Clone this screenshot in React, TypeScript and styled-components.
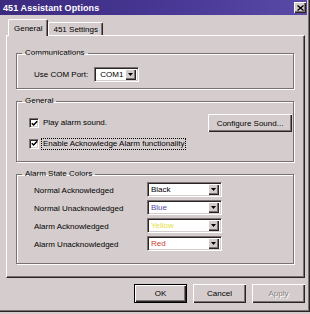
import React from 'react';
import styled, { createGlobalStyle } from 'styled-components';

const FACE = '#d5cdcd';
const SHADOW = '#7a7272';
const DARK = '#2a2424';

const GlobalStyle = createGlobalStyle`
  html, body {
    margin: 0;
    padding: 0;
    background: ${FACE};
  }
  body {
    font-family: "Liberation Sans", Arial, sans-serif;
    font-size: 8px;
    color: #000;
  }
`;

const Window = styled.div`
  width: 310px;
  height: 312px;
  box-sizing: border-box;
  background: ${FACE};
  display: flex;
  flex-direction: column;
  box-shadow: inset -1px -1px 0 ${DARK}, inset -2px -2px 0 ${SHADOW};
`;

const TitleBar = styled.div`
  height: 15px;
  margin-right: 3px;
  padding: 0 1px 0 3px;
  display: flex;
  align-items: center;
  justify-content: space-between;
  background: linear-gradient(90deg, #3b2a7e 0%, #4a3996 60%, #5a4aa8 100%);
`;

const Title = styled.span`
  color: #fff;
  font-weight: bold;
  font-size: 9px;
  letter-spacing: 0.1px;
`;

const CloseButton = styled.div`
  width: 12px;
  height: 11px;
  box-sizing: border-box;
  background: ${FACE};
  box-shadow: inset 1px 1px 0 #fff, inset -1px -1px 0 ${DARK}, inset -2px -2px 0 ${SHADOW};
  display: flex;
  align-items: center;
  justify-content: center;
`;

const Body = styled.div`
  padding: 4px 0 0 6px;
  display: flex;
  flex-direction: column;
`;

const TabStrip = styled.div`
  display: flex;
  align-items: flex-end;
  padding-left: 2px;
  height: 16px;
`;

const Tab = styled.div<{ $active?: boolean }>`
  box-sizing: border-box;
  height: ${({ $active }) => ($active ? '17px' : '13px')};
  margin-bottom: ${({ $active }) => ($active ? '-1px' : '0')};
  padding: 0 ${({ $active }) => ($active ? '5px' : '4px')};
  display: flex;
  align-items: center;
  background: ${FACE};
  border-top: 1px solid #fff;
  border-left: 1px solid #fff;
  border-right: 1px solid ${DARK};
  border-radius: 2px 2px 0 0;
  box-shadow: inset -1px 0 0 ${SHADOW};
  position: relative;
  z-index: ${({ $active }) => ($active ? 2 : 1)};
`;

const Panel = styled.div`
  width: 299px;
  height: 243px;
  box-sizing: border-box;
  border-top: 1px solid #fff;
  border-left: 1px solid #fff;
  border-right: 1px solid ${DARK};
  border-bottom: 1px solid ${DARK};
  box-shadow: inset -1px -1px 0 ${SHADOW};
  padding: 12px 10px 0 9px;
  display: flex;
  flex-direction: column;
  gap: 7px;
`;

const Group = styled.fieldset`
  margin: 0;
  padding: 0;
  min-width: 0;
  border: 1px solid ${SHADOW};
  box-shadow: inset 1px 1px 0 #fff, 1px 1px 0 #fff;
`;

const Legend = styled.legend`
  margin-left: 5px;
  padding: 0 3px;
  line-height: 10px;
  height: 10px;
  font-size: 8px;
`;

const GroupBody = styled.div<{ $pad: string; $gap?: number }>`
  padding: ${({ $pad }) => $pad};
  display: flex;
  flex-direction: column;
  gap: ${({ $gap }) => $gap ?? 0}px;
`;

const PortRow = styled.div`
  display: flex;
  align-items: center;
  gap: 6px;
`;

const Combo = styled.div<{ $width: number }>`
  width: ${({ $width }) => $width}px;
  height: 15px;
  box-sizing: border-box;
  background: #fff;
  border-top: 1px solid ${SHADOW};
  border-left: 1px solid ${SHADOW};
  border-right: 1px solid #fff;
  border-bottom: 1px solid #fff;
  box-shadow: inset 1px 1px 0 ${DARK}, inset -1px -1px 0 ${FACE};
  display: flex;
  align-items: center;
  padding: 2px;
`;

const ComboText = styled.span<{ $color: string; $indent: number }>`
  flex: 1;
  color: ${({ $color }) => $color};
  padding-left: ${({ $indent }) => $indent}px;
  line-height: 11px;
  white-space: nowrap;
`;

const ComboButton = styled.div`
  flex: none;
  width: 11px;
  height: 11px;
  box-sizing: border-box;
  background: ${FACE};
  box-shadow: inset 1px 1px 0 #fff, inset -1px -1px 0 ${DARK}, inset -2px -2px 0 ${SHADOW};
  display: flex;
  align-items: center;
  justify-content: center;
`;

const CheckRow = styled.div`
  display: flex;
  align-items: center;
  justify-content: space-between;
`;

const Check = styled.label`
  display: flex;
  align-items: center;
  gap: 2px;
  height: 11px;
`;

const CheckBox = styled.span`
  width: 10px;
  height: 10px;
  box-sizing: border-box;
  background: #fff;
  border-top: 1px solid ${SHADOW};
  border-left: 1px solid ${SHADOW};
  border-right: 1px solid #fff;
  border-bottom: 1px solid #fff;
  box-shadow: inset 1px 1px 0 ${DARK}, inset -1px -1px 0 ${FACE};
  display: flex;
  align-items: center;
  justify-content: center;
`;

const CheckText = styled.span<{ $focused?: boolean }>`
  margin-left: 1px;
  padding: 0 1px;
  line-height: 10px;
  outline: ${({ $focused }) => ($focused ? '1px dotted #000' : 'none')};
`;

const Button = styled.div<{ $width: number; $height: number; $default?: boolean; $disabled?: boolean }>`
  width: ${({ $width }) => $width}px;
  height: ${({ $height }) => $height}px;
  box-sizing: border-box;
  background: ${FACE};
  display: flex;
  align-items: center;
  justify-content: center;
  box-shadow: ${({ $default }) =>
    $default
      ? `inset 0 0 0 1px #000, inset 2px 2px 0 #fff, inset -2px -2px 0 ${DARK}, inset -3px -3px 0 ${SHADOW}`
      : `inset 1px 1px 0 #fff, inset -1px -1px 0 ${DARK}, inset -2px -2px 0 ${SHADOW}`};
  color: ${({ $disabled }) => ($disabled ? '#8a8282' : '#000')};
  text-shadow: ${({ $disabled }) => ($disabled ? '1px 1px 0 #fff' : 'none')};
`;

const ColorGrid = styled.div`
  display: grid;
  grid-template-columns: 113px 75px;
  row-gap: 3px;
  align-items: center;
`;

const RowLabel = styled.span`
  padding-top: 2px;
`;

const ButtonRow = styled.div`
  width: 299px;
  margin-top: 6px;
  display: flex;
  justify-content: flex-end;
  gap: 6px;
`;

const CloseGlyph = () => (
  <svg width="7" height="6" viewBox="0 0 7 6">
    <path d="M0.5 0.5 L6.5 5.5 M6.5 0.5 L0.5 5.5" stroke="#000" strokeWidth="1.4" />
  </svg>
);

const Arrow = () => (
  <svg width="5" height="3" viewBox="0 0 5 3">
    <path d="M0 0 H5 L2.5 3 Z" fill="#000" />
  </svg>
);

const Tick = () => (
  <svg width="7" height="7" viewBox="0 0 7 7">
    <path d="M0.8 3.2 L2.6 5 L6.2 1.2" stroke="#000" strokeWidth="1.5" fill="none" />
  </svg>
);

const alarmColors = [
  { label: 'Normal Acknowledged', value: 'Black', color: '#000' },
  { label: 'Normal Unacknowledged', value: 'Blue', color: '#5a48a8' },
  { label: 'Alarm Acknowledged', value: 'Yellow', color: '#e6de3c' },
  { label: 'Alarm Unacknowledged', value: 'Red', color: '#c8402c' },
];

export default function App() {
  return (
    <>
      <GlobalStyle />
      <Window>
        <TitleBar>
          <Title>451 Assistant Options</Title>
          <CloseButton>
            <CloseGlyph />
          </CloseButton>
        </TitleBar>
        <Body>
          <TabStrip>
            <Tab $active>General</Tab>
            <Tab>451 Settings</Tab>
          </TabStrip>
          <Panel>
            <Group>
              <Legend>Communications</Legend>
              <GroupBody $pad="9px 0 6px 17px">
                <PortRow>
                  <span>Use COM Port:</span>
                  <Combo $width={45}>
                    <ComboText $color="#000" $indent={3}>COM1</ComboText>
                    <ComboButton>
                      <Arrow />
                    </ComboButton>
                  </Combo>
                </PortRow>
              </GroupBody>
            </Group>
            <Group>
              <Legend>General</Legend>
              <GroupBody $pad="8px 1px 12px 12px" $gap={6}>
                <CheckRow>
                  <Check>
                    <CheckBox>
                      <Tick />
                    </CheckBox>
                    <CheckText>Play alarm sound.</CheckText>
                  </Check>
                  <Button $width={84} $height={18}>Configure Sound...</Button>
                </CheckRow>
                <CheckRow>
                  <Check>
                    <CheckBox>
                      <Tick />
                    </CheckBox>
                    <CheckText $focused>Enable Acknowledge Alarm functionality</CheckText>
                  </Check>
                </CheckRow>
              </GroupBody>
            </Group>
            <Group>
              <Legend>Alarm State Colors</Legend>
              <GroupBody $pad="3px 0 12px 17px">
                <ColorGrid>
                  {alarmColors.map((row) => (
                    <React.Fragment key={row.label}>
                      <RowLabel>{row.label}</RowLabel>
                      <Combo $width={75}>
                        <ComboText $color={row.color} $indent={1}>{row.value}</ComboText>
                        <ComboButton>
                          <Arrow />
                        </ComboButton>
                      </Combo>
                    </React.Fragment>
                  ))}
                </ColorGrid>
              </GroupBody>
            </Group>
          </Panel>
          <ButtonRow>
            <Button $width={53} $height={19} $default>OK</Button>
            <Button $width={53} $height={19}>Cancel</Button>
            <Button $width={53} $height={19} $disabled>Apply</Button>
          </ButtonRow>
        </Body>
      </Window>
    </>
  );
}
